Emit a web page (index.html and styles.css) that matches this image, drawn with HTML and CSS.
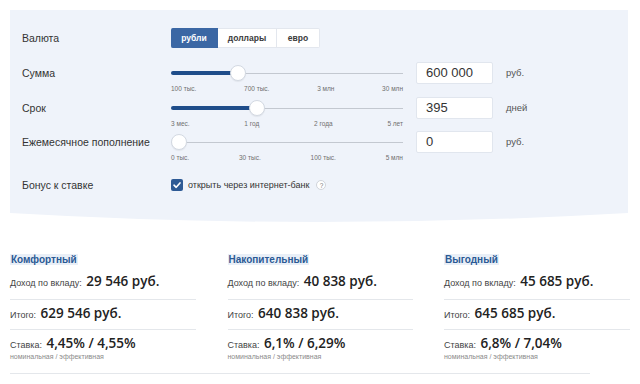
FILE: index.html
```html
<!DOCTYPE html>
<html lang="ru">
<head>
    <meta charset="UTF-8">
    <title>Калькулятор вклада</title>
    <link rel="stylesheet" href="styles.css">
</head>
<body>
<div class="calc">
    <div class="panel">
        <div class="row row-currency">
            <div class="label">Валюта</div>
            <div class="tabs">
                <span class="tab active">рубли</span>
                <span class="tab">доллары</span>
                <span class="tab">евро</span>
            </div>
        </div>
        <div class="row">
            <div class="label">Сумма</div>
            <div class="slider">
                <div class="track">
                    <div class="fill" style="width: 29%"></div>
                    <div class="thumb" style="left: 29%"></div>
                </div>
                <div class="ticks">
                    <span>100 тыс.</span><span>700 тыс.</span><span>3 млн</span><span>30 млн</span>
                </div>
            </div>
            <div class="field">600 000</div>
            <div class="unit">руб.</div>
        </div>
        <div class="row">
            <div class="label">Срок</div>
            <div class="slider">
                <div class="track">
                    <div class="fill" style="width: 37%"></div>
                    <div class="thumb" style="left: 37%"></div>
                </div>
                <div class="ticks">
                    <span>3 мес.</span><span>1 год</span><span>2 года</span><span>5 лет</span>
                </div>
            </div>
            <div class="field">395</div>
            <div class="unit">дней</div>
        </div>
        <div class="row">
            <div class="label">Ежемесячное пополнение</div>
            <div class="slider">
                <div class="track">
                    <div class="fill" style="width: 0%"></div>
                    <div class="thumb" style="left: 0%"></div>
                </div>
                <div class="ticks">
                    <span>0 тыс.</span><span>30 тыс.</span><span>100 тыс.</span><span>5 млн</span>
                </div>
            </div>
            <div class="field">0</div>
            <div class="unit">руб.</div>
        </div>
        <div class="row row-bonus">
            <div class="label">Бонус к ставке</div>
            <div class="check">
                <span class="box">
                    <svg width="12" height="12" viewBox="0 0 12 12"><path d="M3 6.2 L5.2 8.3 L9 3.9" fill="none" stroke="#fff" stroke-width="1.6" stroke-linecap="round" stroke-linejoin="round"/></svg>
                </span>
                <span class="check-text">открыть через интернет-банк</span>
                <span class="hint">?</span>
            </div>
        </div>
    </div>
    <svg class="wave" viewBox="0 0 618 10" preserveAspectRatio="none"><path d="M0 0 H618 Q309 18 0 0 Z" fill="#eff3fa"/></svg>

    <div class="results">
        <div class="col">
            <div class="title"><span>Комфортный</span></div>
            <div class="item first"><span class="key">Доход по вкладу:</span> <span class="val">29 546 руб.</span></div>
            <div class="item"><span class="key">Итого:</span> <span class="val">629 546 руб.</span></div>
            <div class="item last"><span class="key">Ставка:</span> <span class="val">4,45% / 4,55%</span>
                <div class="sub">номинальная / эффективная</div>
            </div>
        </div>
        <div class="col">
            <div class="title"><span>Накопительный</span></div>
            <div class="item first"><span class="key">Доход по вкладу:</span> <span class="val">40 838 руб.</span></div>
            <div class="item"><span class="key">Итого:</span> <span class="val">640 838 руб.</span></div>
            <div class="item last"><span class="key">Ставка:</span> <span class="val">6,1% / 6,29%</span>
                <div class="sub">номинальная / эффективная</div>
            </div>
        </div>
        <div class="col">
            <div class="title"><span>Выгодный</span></div>
            <div class="item first"><span class="key">Доход по вкладу:</span> <span class="val">45 685 руб.</span></div>
            <div class="item"><span class="key">Итого:</span> <span class="val">645 685 руб.</span></div>
            <div class="item last"><span class="key">Ставка:</span> <span class="val">6,8% / 7,04%</span>
                <div class="sub">номинальная / эффективная</div>
            </div>
        </div>
    </div>
    <div class="divider"></div>
</div>
</body>
</html>
```

FILE: styles.css
```css
*{margin: 0;padding: 0;box-sizing: border-box;}
body {
    background: #fff;
    font-family: "Liberation Sans", Arial, sans-serif;
    color: #333;
}
.calc {
    padding: 10px 0 0 10px;
}
/*========panel=================*/
.panel {
    width: 618px;
    background: #eff3fa;
    padding: 18px 0 21px 12px;
}
.wave {
    display: block;
    width: 618px;
    height: 10px;
}
.row {
    display: grid;
    grid-template-columns: 136px 232px 77px auto;
    column-gap: 13px;
    align-items: start;
    margin-bottom: 3.5px;
}
.row-currency {
    margin-bottom: 14px;
}
.row-currency .label {
    line-height: 20px;
}
.label {
    font-size: 10.5px;
    line-height: 22px;
    color: #333;
}
/*========tabs=================*/
.tabs {
    display: flex;
    grid-column: 2 / 4;
    height: 20px;
}
.tab {
    display: flex;
    align-items: center;
    justify-content: center;
    height: 20px;
    background: #fff;
    border: 1px solid #e3e7ee;
    border-left: none;
    font-size: 8.5px;
    font-weight: bold;
    color: #3a3a3a;
}
.tab:nth-child(1) { width: 47px; border-radius: 2px 0 0 2px; }
.tab:nth-child(2) { width: 59px; }
.tab:nth-child(3) { width: 43px; border-radius: 0 2px 2px 0; }
.tab.active {
    background: #3b67a4;
    border-color: #3b67a4;
    color: #fff;
}
/*========slider=================*/
.slider {
    height: 31px;
}
.track {
    position: relative;
    height: 22px;
}
.track:before {
    content: "";
    position: absolute;
    left: 0;
    right: 0;
    top: 11px;
    height: 1px;
    background: #c3c8d0;
}
.fill {
    position: absolute;
    left: 0;
    top: 9px;
    height: 4px;
    border-radius: 2px;
    background: #1f4d8a;
}
.thumb {
    position: absolute;
    top: 3px;
    width: 16px;
    height: 16px;
    margin-left: -8px;
    border-radius: 50%;
    background: #fff;
    border: 1px solid #d3d9e2;
    box-shadow: 0 1px 1px rgba(0,0,0,.06);
}
.thumb[style="left: 0%"] {
    margin-left: 0;
}
.ticks {
    display: flex;
    justify-content: space-between;
    font-size: 6.5px;
    line-height: 9px;
    color: #6f6f6f;
}
.field {
    height: 22px;
    background: #fff;
    border: 1px solid #e1e6ee;
    border-radius: 2px;
    padding-left: 9px;
    font-size: 13px;
    line-height: 20px;
    color: #333;
}
.unit {
    font-size: 9.5px;
    line-height: 22px;
    color: #555;
}
/*========bonus=================*/
.row-bonus {
    margin: 16px 0 0 0;
}
.row-bonus .label {
    line-height: 14px;
}
.check {
    display: flex;
    align-items: center;
    grid-column: 2 / 5;
    height: 14px;
}
.box {
    display: flex;
    width: 12px;
    height: 12px;
    border-radius: 2px;
    background: #2d5a95;
}
.check-text {
    margin-left: 5px;
    font-size: 9px;
    color: #333;
}
.hint {
    display: flex;
    align-items: center;
    justify-content: center;
    width: 10px;
    height: 10px;
    margin-left: 7px;
    border-radius: 50%;
    border: 1px solid #d0d4da;
    background: #fff;
    font-size: 6.5px;
    color: #777;
}
/*========results=================*/
.results {
    display: grid;
    grid-template-columns: 186px 185px 186px;
    column-gap: 31.5px;
    margin-top: 30px;
}
.title {
    font-size: 10px;
    font-weight: bold;
    line-height: 14px;
    color: #2b5a95;
    margin-bottom: 5px;
}
.title span {
    background: #e9eff7;
    padding: 0 1px;
}
.item {
    border-bottom: 1px solid #e4e7eb;
    padding: 4px 0 7px 0;
    white-space: nowrap;
}
.item.first {
    padding: 0 0 9px 0;
}
.item.last {
    border-bottom: none;
    padding: 4px 0 0 0;
}
.key {
    font-size: 9px;
    color: #444;
}
.val {
    font-family: "Open Sans", sans-serif;
    font-weight: 600;
    font-size: 13.5px;
    line-height: 18px;
    color: #222;
}
.sub {
    font-size: 7px;
    line-height: 9px;
    color: #8a8a8a;
}
.divider {
    width: 580px;
    height: 1px;
    margin-top: 12px;
    background: #e4e7eb;
}
```
